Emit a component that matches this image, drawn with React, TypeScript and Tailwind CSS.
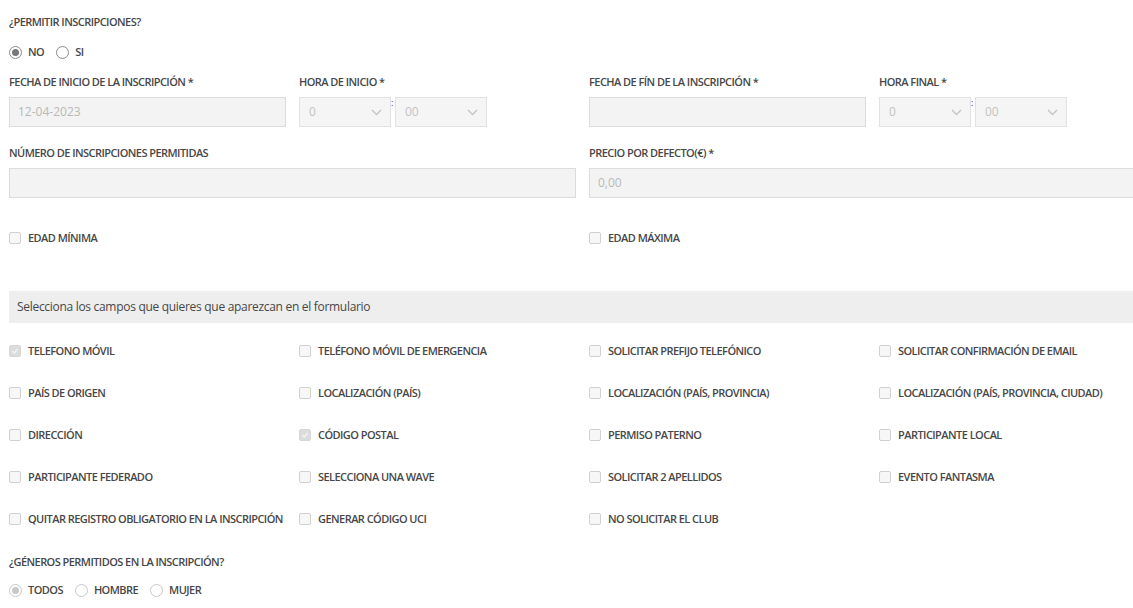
import React from "react";

const font = { fontFamily: '"Open Sans", "Liberation Sans", sans-serif' };

function Radio({ checked, light }: { checked?: boolean; light?: boolean }) {
  return (
    <span
      className={`flex h-[13px] w-[13px] shrink-0 items-center justify-center rounded-full border ${
        light ? "border-[#c8c8c8]" : "border-[#8a8a8a]"
      } bg-white`}
    >
      {checked && (
        <span className={`h-[7px] w-[7px] rounded-full ${light ? "bg-[#c8c8c8]" : "bg-[#777]"}`} />
      )}
    </span>
  );
}

function Check({ checked }: { checked?: boolean }) {
  return (
    <span
      className={`flex h-[12px] w-[12px] shrink-0 items-center justify-center rounded-[2px] border ${
        checked ? "border-[#d6d6d6] bg-[#dcdcdc]" : "border-[#d0d0d0] bg-[#f7f7f7]"
      }`}
    >
      {checked && (
        <svg width="8" height="8" viewBox="0 0 8 8">
          <path d="M1.2 4.2 L3.2 6 L6.8 1.8" stroke="#f4f4f4" strokeWidth="1.3" fill="none" />
        </svg>
      )}
    </span>
  );
}

function Label({ children }: { children: React.ReactNode }) {
  return (
    <div className="h-[16px] text-[11px] font-semibold leading-[16px] tracking-[-0.55px] text-[#474747]">
      {children}
    </div>
  );
}

function Select({ value }: { value: string }) {
  return (
    <div className="flex h-[30px] w-[92px] items-center justify-between border border-[#e2e2e2] bg-[#f5f5f5] pl-[9px] pr-[8px]">
      <span className="text-[12px] text-[#c4c4c4]">{value}</span>
      <svg width="11" height="7" viewBox="0 0 11 7">
        <path d="M1 1 L5.5 5.5 L10 1" stroke="#c4c4c4" strokeWidth="1.3" fill="none" />
      </svg>
    </div>
  );
}

function TimeSelects() {
  return (
    <div className="mt-[7px] flex items-start">
      <Select value="0" />
      <span className="w-[4px] text-[9px] leading-[12px] text-[#333]">:</span>
      <Select value="00" />
    </div>
  );
}

function Input({ value }: { value?: string }) {
  return (
    <div className="mt-[7px] flex h-[30px] items-center border border-[#dcdcdc] bg-[#f3f3f3] px-[8px] text-[12px] text-[#b9b9b9]">
      {value}
    </div>
  );
}

function Txt({ children, className = "" }: { children: React.ReactNode; className?: string }) {
  return (
    <span
      className={`block text-[11px] font-semibold leading-[16px] tracking-[-0.55px] text-[#474747] ${className}`}
    >
      {children}
    </span>
  );
}

function CheckItem({ label, checked }: { label: string; checked?: boolean }) {
  return (
    <div className="flex items-center gap-[7px]">
      <Check checked={checked} />
      <Txt>{label}</Txt>
    </div>
  );
}

const fields: [string, boolean?][] = [
  ["TELEFONO MÓVIL", true],
  ["TELÉFONO MÓVIL DE EMERGENCIA"],
  ["SOLICITAR PREFIJO TELEFÓNICO"],
  ["SOLICITAR CONFIRMACIÓN DE EMAIL"],
  ["PAÍS DE ORIGEN"],
  ["LOCALIZACIÓN (PAÍS)"],
  ["LOCALIZACIÓN (PAÍS, PROVINCIA)"],
  ["LOCALIZACIÓN (PAÍS, PROVINCIA, CIUDAD)"],
  ["DIRECCIÓN"],
  ["CÓDIGO POSTAL", true],
  ["PERMISO PATERNO"],
  ["PARTICIPANTE LOCAL"],
  ["PARTICIPANTE FEDERADO"],
  ["SELECCIONA UNA WAVE"],
  ["SOLICITAR 2 APELLIDOS"],
  ["EVENTO FANTASMA"],
  ["QUITAR REGISTRO OBLIGATORIO EN LA INSCRIPCIÓN"],
  ["GENERAR CÓDIGO UCI"],
  ["NO SOLICITAR EL CLUB"],
];

export default function App() {
  return (
    <div className="h-[608px] w-[1133px] overflow-hidden bg-white" style={font}>
      <div className="w-[1160px] pl-[9px] pt-[14px]">
        <Label>¿PERMITIR INSCRIPCIONES?</Label>
        <div className="mt-[14px] flex h-[16px] items-center">
          <Radio checked />
          <Txt className="ml-[6px]">NO</Txt>
          <span className="ml-[12px]">
            <Radio />
          </span>
          <Txt className="ml-[6px]">SI</Txt>
        </div>

        <div className="mt-[14px] grid grid-cols-[290px_290px_290px_290px]">
          <div className="pr-[13px]">
            <Label>FECHA DE INICIO DE LA INSCRIPCIÓN *</Label>
            <Input value="12-04-2023" />
          </div>
          <div>
            <Label>HORA DE INICIO *</Label>
            <TimeSelects />
          </div>
          <div className="pr-[13px]">
            <Label>FECHA DE FÍN DE LA INSCRIPCIÓN *</Label>
            <Input />
          </div>
          <div>
            <Label>HORA FINAL *</Label>
            <TimeSelects />
          </div>
        </div>

        <div className="mt-[18px] grid grid-cols-[580px_580px]">
          <div className="pr-[13px]">
            <Label>NÚMERO DE INSCRIPCIONES PERMITIDAS</Label>
            <Input />
          </div>
          <div className="pr-[13px]">
            <Label>PRECIO POR DEFECTO(€) *</Label>
            <Input value="0,00" />
          </div>
        </div>

        <div className="mt-[32px] grid h-[16px] grid-cols-[580px_580px] items-center">
          <CheckItem label="EDAD MÍNIMA" />
          <CheckItem label="EDAD MÁXIMA" />
        </div>

        <div className="mt-[45px] flex h-[32px] items-center bg-[#eeeeee] px-[8px] text-[12px] tracking-[-0.3px] text-[#474747]">
          Selecciona los campos que quieres que aparezcan en el formulario
        </div>

        <div className="mt-[20px] grid grid-cols-[290px_290px_290px_290px] gap-y-[26px]">
          {fields.map(([l, c]) => (
            <div key={l} className="flex h-[16px] items-center">
              <CheckItem label={l} checked={c} />
            </div>
          ))}
        </div>

        <div className="mt-[27px]">
          <Label>¿GÉNEROS PERMITIDOS EN LA INSCRIPCIÓN?</Label>
        </div>
        <div className="mt-[12px] flex h-[16px] items-center">
          <Radio checked light />
          <Txt className="ml-[6px]">TODOS</Txt>
          <span className="ml-[12px]">
            <Radio light />
          </span>
          <Txt className="ml-[6px]">HOMBRE</Txt>
          <span className="ml-[12px]">
            <Radio light />
          </span>
          <Txt className="ml-[6px]">MUJER</Txt>
        </div>
      </div>
    </div>
  );
}
